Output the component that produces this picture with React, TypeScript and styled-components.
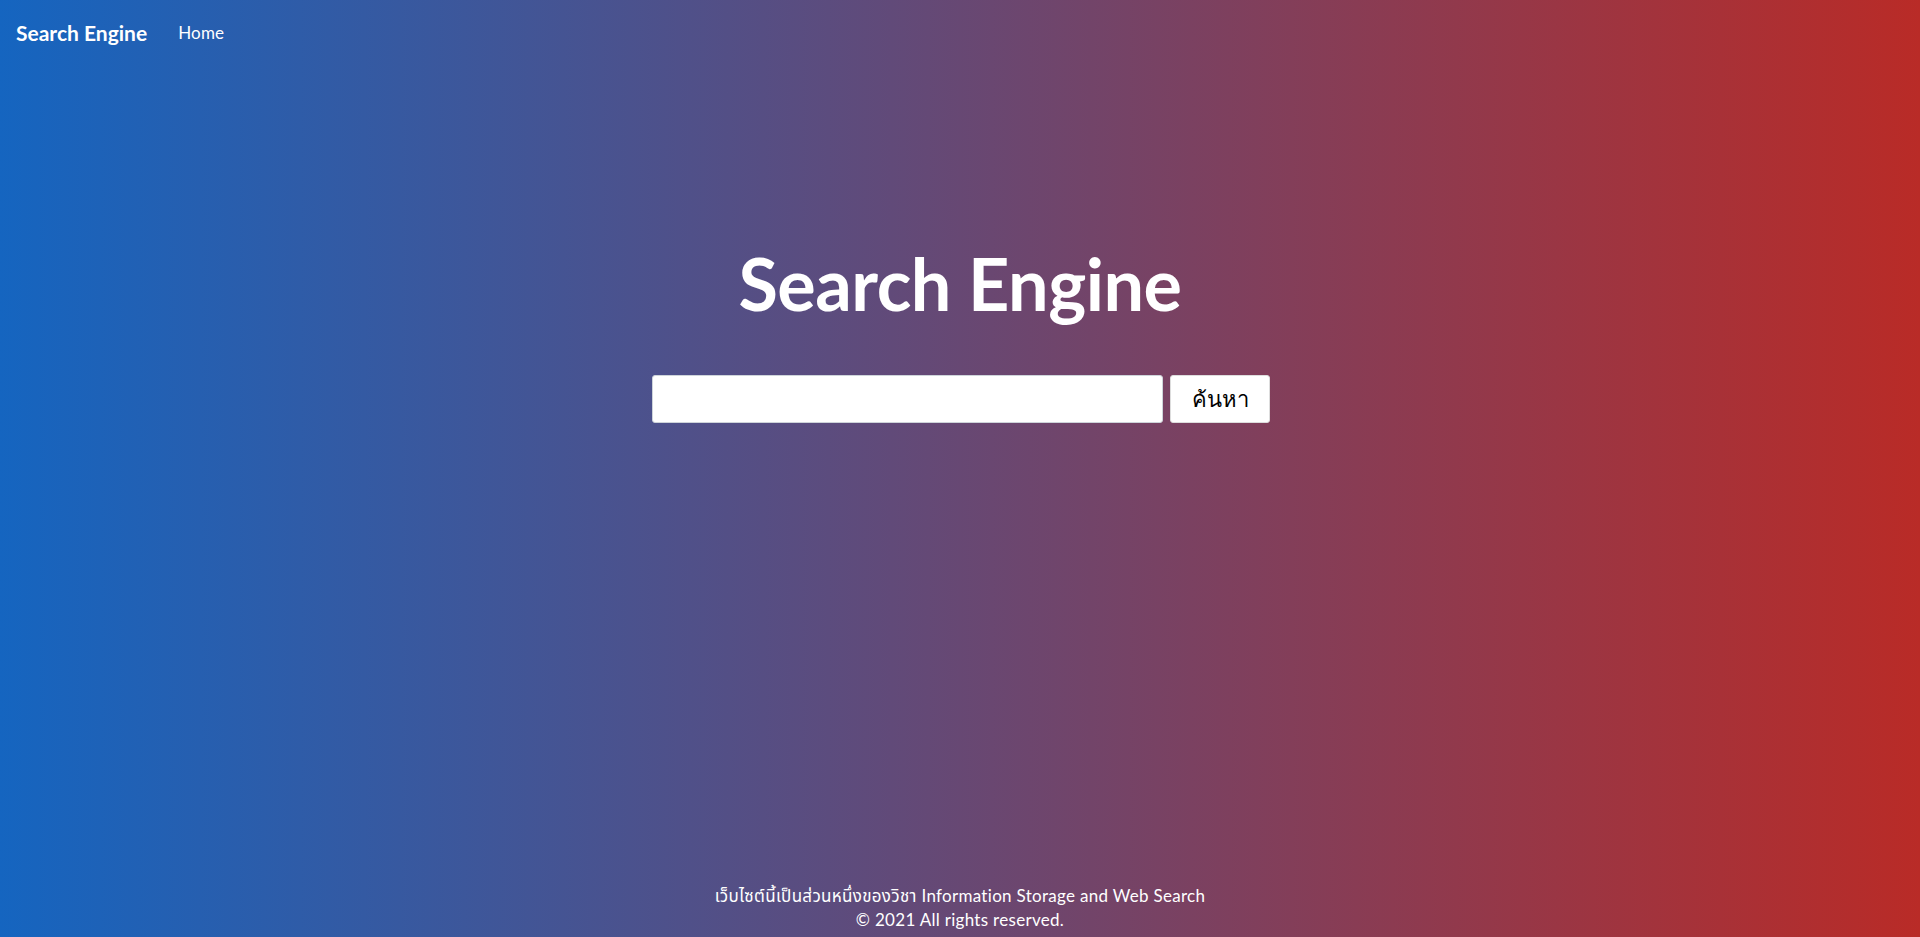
import React from "react";
import styled, { createGlobalStyle } from "styled-components";

const Global = createGlobalStyle`
  html, body { margin: 0; padding: 0; }
  body {
    font-family: "Lato", "Noto Sans", "Noto Sans Thai", sans-serif;
    background: linear-gradient(to right, #1565c0, #b92b27);
    min-height: 937px;
    color: #fff;
  }
  * { box-sizing: border-box; }
`;

const Page = styled.div`
  min-height: 937px;
  display: flex;
  flex-direction: column;
`;

const Nav = styled.nav`
  display: flex;
  align-items: center;
  padding: 12px 16px;
  height: 64px;
`;

const Brand = styled.a`
  font-size: 21px;
  font-weight: 700;
  color: #fff;
  text-decoration: none;
  margin-right: 31px;
  letter-spacing: 0;
`;

const NavLink = styled.a`
  font-size: 17px;
  color: #fff;
  text-decoration: none;
  letter-spacing: 0.2px;
`;

const Main = styled.main`
  flex: 1;
  display: flex;
  flex-direction: column;
  align-items: center;
  padding-top: 176px;
`;

const Title = styled.h1`
  margin: 0;
  font-size: 72px;
  font-weight: 700;
  line-height: 1.2;
  letter-spacing: -0.5px;
`;

const Form = styled.form`
  display: flex;
  gap: 7px;
  margin-top: 49px;
  margin-left: 2px;
`;

const Input = styled.input`
  width: 511px;
  height: 48px;
  border: 1px solid #ced4da;
  border-radius: 3px;
  background: #fff;
  font-size: 18px;
  padding: 0 12px;
  outline: none;
`;

const Button = styled.button`
  width: 100px;
  height: 48px;
  border: 1px solid #ddd;
  border-radius: 3px;
  background: #fff;
  color: #000;
  font-size: 22px;
  font-weight: 400;
  font-family: "Lato", "Noto Sans", sans-serif;
  cursor: pointer;
`;

const Footer = styled.footer`
  text-align: center;
  font-size: 17px;
  line-height: 24px;
  letter-spacing: 0.3px;
  padding-bottom: 5px;
`;

export default function App() {
  return (
    <>
      <Global />
      <Page>
        <Nav>
          <Brand href="#">Search Engine</Brand>
          <NavLink href="#">Home</NavLink>
        </Nav>
        <Main>
          <Title>Search Engine</Title>
          <Form onSubmit={(e) => e.preventDefault()}>
            <Input type="text" />
            <Button type="submit">ค้นหา</Button>
          </Form>
        </Main>
        <Footer>
          <div>เว็บไซต์นี้เป็นส่วนหนึ่งของวิชา Information Storage and Web Search</div>
          <div>© 2021 All rights reserved.</div>
        </Footer>
      </Page>
    </>
  );
}
